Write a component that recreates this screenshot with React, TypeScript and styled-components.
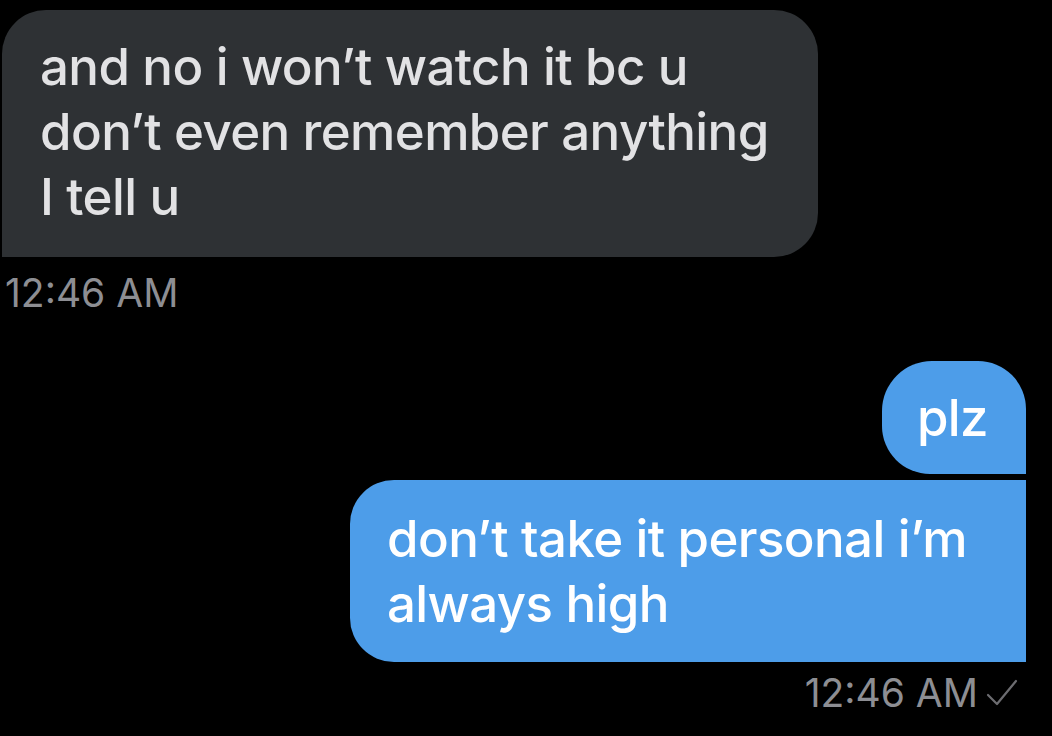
import React from 'react'
import styled, { createGlobalStyle, css } from 'styled-components'

const GlobalStyle = createGlobalStyle`
  html, body {
    margin: 0;
    padding: 0;
    background: #000;
  }
  body {
    font-family: Inter, 'Noto Sans', 'Liberation Sans', sans-serif;
    -webkit-font-smoothing: antialiased;
  }
`

const Thread = styled.div`
  width: 1052px;
  height: 736px;
  overflow: hidden;
  background: #000;
  display: flex;
  flex-direction: column;
  padding-top: 10px;
  box-sizing: border-box;
`

const Group = styled.div<{ $out?: boolean }>`
  display: flex;
  flex-direction: column;
  align-items: ${(p) => (p.$out ? 'flex-end' : 'flex-start')};
  padding: ${(p) => (p.$out ? '0 26px 0 0' : '0 0 0 2px')};
  margin-top: ${(p) => (p.$out ? '45px' : '0')};
  gap: 6px;
`

const bubbleText = css`
  box-sizing: border-box;
  font-size: 51px;
  font-weight: 500;
  letter-spacing: -0.6px;
  line-height: 65px;
`

// grey incoming bubble, tail corner bottom-left
const Incoming = styled.div`
  ${bubbleText};
  width: 816px;
  padding: 24px 40px 28px 38px;
  background: #2e3134;
  color: #e2e2e4;
  border-radius: 44px 44px 44px 0;
`

const Outgoing = styled.div<{ $first?: boolean }>`
  ${bubbleText};
  background: #4d9de9;
  color: #fff;
  ${(p) =>
    p.$first
      ? css`
          padding: 24px 38px 24px 35px;
          border-radius: 50px 48px 0 48px;
        `
      : css`
          width: 676px;
          padding: 26px 40px 26px 37px;
          border-radius: 44px 0 0 44px;
        `}
`

const Stamp = styled.div<{ $out?: boolean }>`
  display: flex;
  align-items: center;
  gap: 8px;
  color: #8d8e93;
  font-size: 39px;
  font-weight: 400;
  line-height: 46px;
  margin-top: ${(p) => (p.$out ? '2px' : '7px')};
  margin-left: ${(p) => (p.$out ? '0' : '3px')};
  margin-right: ${(p) => (p.$out ? '8px' : '0')};
`

const Check = () => (
  <svg width="32" height="30" viewBox="0 0 32 30" fill="none">
    <path d="M2 17 L11 26 L30 3" stroke="#6c6c70" strokeWidth="2.2" strokeLinecap="round" strokeLinejoin="round" />
  </svg>
)

export default function App() {
  return (
    <>
      <GlobalStyle />
      <Thread>
        <Group>
          <Incoming>and no i won’t watch it bc u don’t even remember anything I tell u</Incoming>
          <Stamp>12:46 AM</Stamp>
        </Group>
        <Group $out>
          <Outgoing $first>plz</Outgoing>
          <Outgoing>don’t take it personal i’m always high</Outgoing>
          <Stamp $out>
            12:46 AM
            <Check />
          </Stamp>
        </Group>
      </Thread>
    </>
  )
}
